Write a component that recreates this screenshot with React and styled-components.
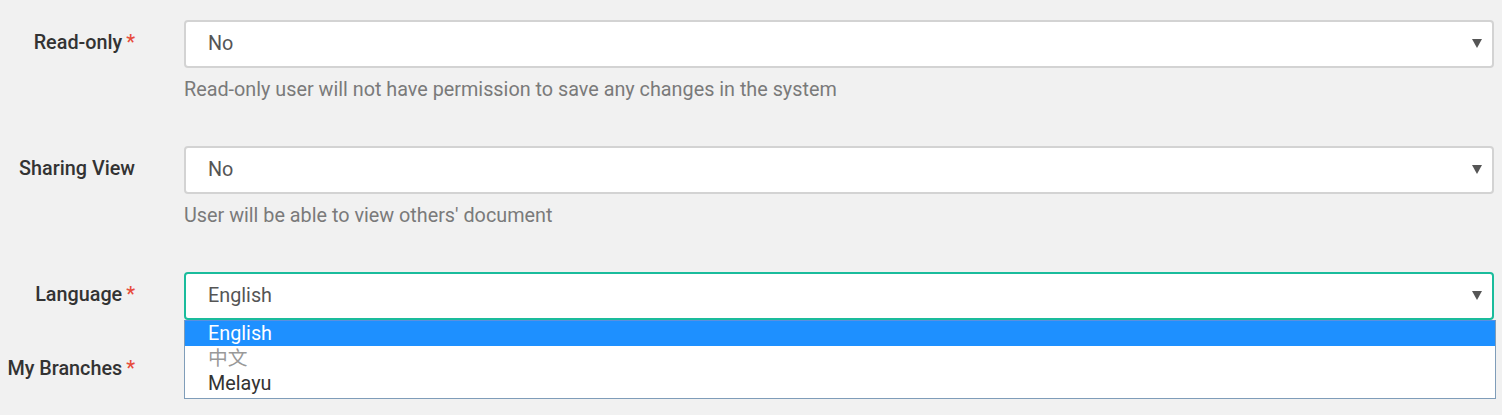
import React from "react"
import styled, { createGlobalStyle } from "styled-components"

const GlobalStyle = createGlobalStyle`
    html, body {
        margin: 0;
        padding: 0;
        background: #f1f1f1;
        font-family: Roboto, "Noto Sans", "Noto Sans CJK SC", sans-serif;
    }
    * { box-sizing: border-box; }
`

const Form = styled.div`
    padding: 20px 8px 0 0;
    height: 415px;
    overflow: hidden;
`

const Group = styled.div`
    display: grid;
    grid-template-columns: 135px 1fr;
    column-gap: 49px;
    margin-bottom: 26px;
`

const Label = styled.label`
    text-align: right;
    font-size: 19.8px;
    font-weight: 500;
    line-height: 46px;
    color: #333;
    white-space: nowrap;
`

const Required = styled.span`
    color: #e74c3c;
    margin-left: 4px;
`

const Field = styled.div`
    position: relative;
`

const Select = styled.div`
    height: 48px;
    display: flex;
    align-items: center;
    justify-content: space-between;
    padding: 0 10px 1px 22px;
    background: #fff;
    border: 2px solid ${p => (p.$focused ? "#1abc9c" : "#d3d3d3")};
    border-radius: 4px;
    font-size: 19.8px;
    color: #555;
`

const Arrow = styled.span`
    width: 0;
    height: 0;
    border-left: 5px solid transparent;
    border-right: 5px solid transparent;
    border-top: 9px solid #555;
`

const Help = styled.p`
    margin: 11px 0 19px;
    font-size: 19.8px;
    line-height: 22px;
    color: #7a7a7a;
`

const Menu = styled.ul`
    position: absolute;
    top: 48px;
    left: 0;
    right: -2px;
    margin: 0;
    padding: 0 0 2px;
    list-style: none;
    background: #fff;
    border: 1px solid #7f9db9;
    border-top-color: #5a8fe0;
    z-index: 5;
`

const Option = styled.li`
    height: 25px;
    line-height: 25px;
    padding-left: 23px;
    font-size: 19.8px;
    color: ${p => (p.$active ? "#fff" : p.$muted ? "#999" : "#333")};
    background: ${p => (p.$active ? "#1e90ff" : "#fff")};
`

function SelectField({ value, focused }) {
    return (
        <Select $focused={focused}>
            <span>{value}</span>
            <Arrow />
        </Select>
    )
}

export default function App() {
    return (
        <>
            <GlobalStyle />
            <Form>
                <Group>
                    <Label>Read-only<Required>*</Required></Label>
                    <Field>
                        <SelectField value="No" />
                        <Help>Read-only user will not have permission to save any changes in the system</Help>
                    </Field>
                </Group>
                <Group>
                    <Label>Sharing View</Label>
                    <Field>
                        <SelectField value="No" />
                        <Help>User will be able to view others' document</Help>
                    </Field>
                </Group>
                <Group>
                    <Label>Language<Required>*</Required></Label>
                    <Field>
                        <SelectField value="English" focused />
                        <Menu>
                            <Option $active>English</Option>
                            <Option $muted>中文</Option>
                            <Option>Melayu</Option>
                        </Menu>
                    </Field>
                </Group>
                <Group>
                    <Label>My Branches<Required>*</Required></Label>
                    <Field>
                        <SelectField value="" />
                    </Field>
                </Group>
            </Form>
        </>
    )
}
